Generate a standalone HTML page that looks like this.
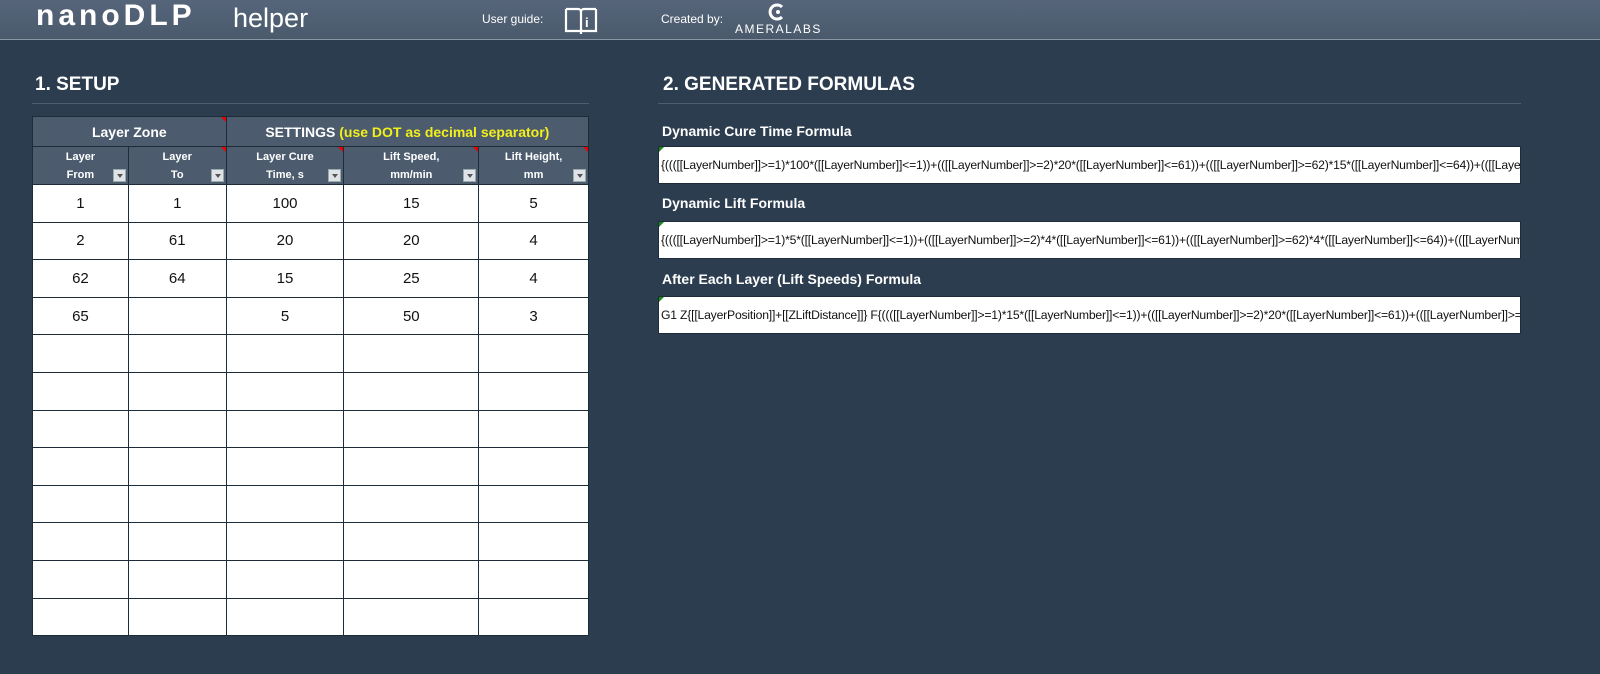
<!DOCTYPE html>
<html><head><meta charset="utf-8"><style>
*{margin:0;padding:0;box-sizing:border-box}
body{width:1600px;height:674px;background:#2c3d4f;font-family:"Liberation Sans",sans-serif;position:relative;overflow:hidden;color:#fff}
.hdr{position:absolute;left:0;top:0;width:1600px;height:40px;background:linear-gradient(#56657a,#4a5a6c);border-bottom:1px solid #8a96a3}
.abs{position:absolute;white-space:nowrap}
.title{font-weight:bold;font-size:19px;color:#fff}
.rule{position:absolute;height:1px;background:#4d5d6e}
table{position:absolute;left:32px;top:116px;border-collapse:collapse;width:557px}
td,th{border:1px solid #1e2b38}
th{background:#4c5c6e;color:#fff;font-weight:bold;position:relative}
td{background:#fff;color:#111;text-align:center;font-size:15px;height:37.6px}
.sub th{font-size:11px;line-height:18px;height:38px}
.dd{position:absolute;right:2px;bottom:2px;width:13px;height:13px;background:#dfe3e8;border:1px solid #9aa;}
.dd:after{content:"";position:absolute;left:3px;top:4px;border-left:3px solid transparent;border-right:3px solid transparent;border-top:4px solid #555}
.red{position:absolute;right:0;top:0;border-left:5px solid transparent;border-top:5px solid #e00}
.lab{font-weight:bold;font-size:14px;color:#fff}
.box{position:absolute;left:658px;width:863px;height:38px;background:#fff;border:1px solid #1e2b38;color:#111;font-size:12.2px;line-height:36px;padding-left:2px;overflow:hidden;white-space:nowrap;letter-spacing:-0.2px}
.g{position:absolute;left:0;top:0;border-right:5px solid transparent;border-top:5px solid #1a8a1a}
</style></head><body>
<div class="hdr"></div>
<div class="abs" style="left:36px;top:-1px;font-size:30px;font-weight:bold;letter-spacing:4px;color:#fff">nanoDLP</div>
<div class="abs" style="left:233px;top:3px;font-size:27px;color:#fff">helper</div>
<div class="abs" style="left:482px;top:12px;font-size:12px">User guide:</div>
<svg class="abs" style="left:563px;top:6px" width="36" height="30" viewBox="0 0 36 30"><path d="M3 3h12a3 3 0 0 1 3 3v22M33 3H21a3 3 0 0 0-3 3M3 3v22h15M33 3v22H18" fill="none" stroke="#fff" stroke-width="2.2"/><text x="22" y="21" font-size="13" font-weight="bold" fill="#fff" font-family="Liberation Sans">i</text></svg>
<div class="abs" style="left:661px;top:12px;font-size:12px">Created by:</div>
<svg class="abs" style="left:766px;top:2px" width="24" height="20" viewBox="0 0 24 20"><path d="M16 5a7 7 0 1 0 0 10" fill="none" stroke="#fff" stroke-width="3"/><circle cx="12" cy="10" r="2" fill="#fff"/></svg>
<div class="abs" style="left:735px;top:22px;font-size:12px;letter-spacing:1.5px">AMERALABS</div>

<div class="abs title" style="left:35px;top:74px">1. SETUP</div>
<div class="abs title" style="left:663px;top:74px">2. GENERATED FORMULAS</div>
<div class="rule" style="left:32px;top:103px;width:557px"></div>
<div class="rule" style="left:658px;top:103px;width:863px"></div>

<table>
<colgroup><col style="width:96px"><col style="width:98px"><col style="width:118px"><col style="width:135px"><col style="width:110px"></colgroup>
<tr style="height:30px"><th colspan="2" style="font-size:14px">Layer Zone<span class="red"></span></th><th colspan="3" style="font-size:14px">SETTINGS <span style="color:#f2ef1a">(use DOT as decimal separator)</span></th></tr>
<tr class="sub"><th>Layer<br>From<span class="dd"></span></th><th>Layer<br>To<span class="dd"></span><span class="red"></span></th><th>Layer Cure<br>Time, s<span class="dd"></span><span class="red"></span></th><th>Lift Speed,<br>mm/min<span class="dd"></span><span class="red"></span></th><th>Lift Height,<br>mm<span class="dd"></span><span class="red"></span></th></tr>
<tr><td>1</td><td>1</td><td>100</td><td>15</td><td>5</td></tr>
<tr><td>2</td><td>61</td><td>20</td><td>20</td><td>4</td></tr>
<tr><td>62</td><td>64</td><td>15</td><td>25</td><td>4</td></tr>
<tr><td>65</td><td></td><td>5</td><td>50</td><td>3</td></tr>
<tr><td></td><td></td><td></td><td></td><td></td></tr>
<tr><td></td><td></td><td></td><td></td><td></td></tr>
<tr><td></td><td></td><td></td><td></td><td></td></tr>
<tr><td></td><td></td><td></td><td></td><td></td></tr>
<tr><td></td><td></td><td></td><td></td><td></td></tr>
<tr><td></td><td></td><td></td><td></td><td></td></tr>
<tr><td></td><td></td><td></td><td></td><td></td></tr>
<tr><td></td><td></td><td></td><td></td><td></td></tr>
</table>

<div class="abs lab" style="left:662px;top:123px">Dynamic Cure Time Formula</div>
<div class="box" style="top:146px"><span class="g"></span>{((([[LayerNumber]]&gt;=1)*100*([[LayerNumber]]&lt;=1))+(([[LayerNumber]]&gt;=2)*20*([[LayerNumber]]&lt;=61))+(([[LayerNumber]]&gt;=62)*15*([[LayerNumber]]&lt;=64))+(([[LayerNumber]]&gt;=65)*5)}</div>
<div class="abs lab" style="left:662px;top:195px">Dynamic Lift Formula</div>
<div class="box" style="top:221px"><span class="g"></span>{((([[LayerNumber]]&gt;=1)*5*([[LayerNumber]]&lt;=1))+(([[LayerNumber]]&gt;=2)*4*([[LayerNumber]]&lt;=61))+(([[LayerNumber]]&gt;=62)*4*([[LayerNumber]]&lt;=64))+(([[LayerNumber]]&gt;=65)*3)}</div>
<div class="abs lab" style="left:662px;top:271px">After Each Layer (Lift Speeds) Formula</div>
<div class="box" style="top:296px"><span class="g"></span>G1 Z{[[LayerPosition]]+[[ZLiftDistance]]} F{((([[LayerNumber]]&gt;=1)*15*([[LayerNumber]]&lt;=1))+(([[LayerNumber]]&gt;=2)*20*([[LayerNumber]]&lt;=61))+(([[LayerNumber]]&gt;=62)*25*([[LayerNumber]]&lt;=64))</div>
</body></html>
